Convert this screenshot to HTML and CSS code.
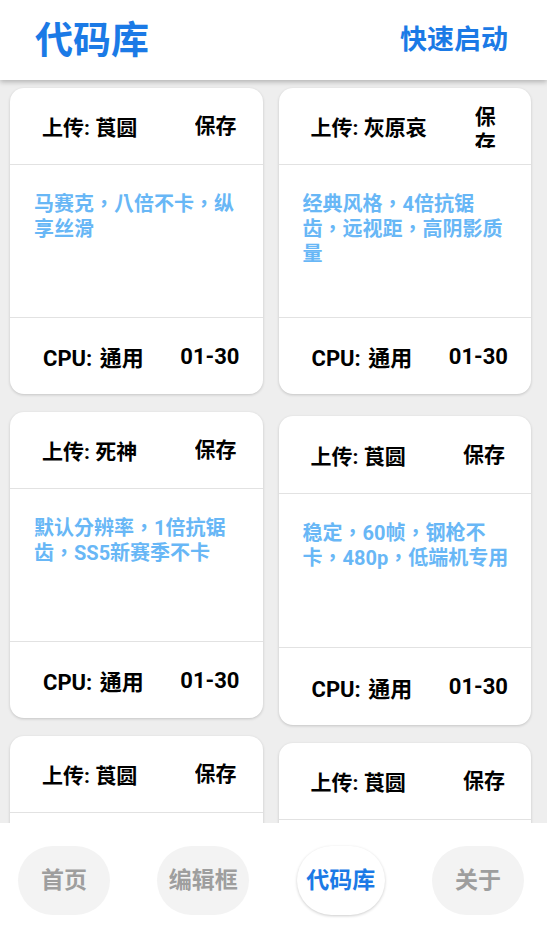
FILE: index.html
```html
<!DOCTYPE html>
<html lang="zh-CN">
<head>
    <meta charset="UTF-8">
    <meta name="viewport" content="width=device-width, initial-scale=1.0">
    <title>代码库</title>
    <link rel="stylesheet" href="styles.css">
</head>
<body>
    <header class="top-bar">
        <h1 class="page-title">代码库</h1>
        <a class="quick-start" href="#">快速启动</a>
    </header>

    <main class="library" lang="zh-TW">
        <div class="column">
            <div class="card">
                <div class="card-head">
                    <span class="uploader">上传: 莨圆</span>
                    <span class="save">保存</span>
                </div>
                <div class="card-body">马赛克，八倍不卡，纵享丝滑</div>
                <div class="card-foot">
                    <span>CPU: 通用</span>
                    <span>01-30</span>
                </div>
            </div>

            <div class="card">
                <div class="card-head">
                    <span class="uploader">上传: 死神</span>
                    <span class="save">保存</span>
                </div>
                <div class="card-body">默认分辨率，1倍抗锯齿，SS5新赛季不卡</div>
                <div class="card-foot">
                    <span>CPU: 通用</span>
                    <span>01-30</span>
                </div>
            </div>

            <div class="card">
                <div class="card-head">
                    <span class="uploader">上传: 莨圆</span>
                    <span class="save">保存</span>
                </div>
                <div class="card-body">高帧率，低画质，流畅优先</div>
                <div class="card-foot">
                    <span>CPU: 通用</span>
                    <span>01-30</span>
                </div>
            </div>
        </div>

        <div class="column">
            <div class="card">
                <div class="card-head">
                    <span class="uploader">上传: 灰原哀</span>
                    <span class="save">保存</span>
                </div>
                <div class="card-body">经典风格，4倍抗锯齿，远视距，高阴影质量</div>
                <div class="card-foot">
                    <span>CPU: 通用</span>
                    <span>01-30</span>
                </div>
            </div>

            <div class="card card-loose">
                <div class="card-head">
                    <span class="uploader">上传: 莨圆</span>
                    <span class="save">保存</span>
                </div>
                <div class="card-body">稳定，60帧，钢枪不卡，480p，低端机专用</div>
                <div class="card-foot">
                    <span>CPU: 通用</span>
                    <span>01-30</span>
                </div>
            </div>

            <div class="card">
                <div class="card-head">
                    <span class="uploader">上传: 莨圆</span>
                    <span class="save">保存</span>
                </div>
                <div class="card-body">均衡画质，90帧，适合中端机</div>
                <div class="card-foot">
                    <span>CPU: 通用</span>
                    <span>01-30</span>
                </div>
            </div>
        </div>
    </main>

    <nav class="bottom-nav">
        <a class="nav-btn" href="#">首页</a>
        <a class="nav-btn" href="#">编辑框</a>
        <a class="nav-btn active" href="#">代码库</a>
        <a class="nav-btn" href="#">关于</a>
    </nav>
</body>
</html>
```

FILE: styles.css
```css
html, body {
    height: 100%;
}
body {
    margin: 0;
    display: flex;
    flex-direction: column;
    overflow: hidden;
    background-color: #eeeeee;
    font-family: Roboto, "Noto Sans CJK TC", sans-serif;
}
a {
    text-decoration: none;
}
.top-bar {
    position: relative;
    z-index: 2;
    flex-shrink: 0;
    height: 80px;
    display: flex;
    align-items: center;
    justify-content: space-between;
    padding: 0 39px 0 35px;
    background-color: white;
    box-shadow: 0 2px 5px rgba(0,0,0,0.25);
}
.page-title {
    margin: 0;
    color: #1b7ae6;
    font-size: 38px;
    font-weight: bold;
    line-height: 1;
}
.quick-start {
    color: #1b7ae6;
    font-size: 27px;
    font-weight: bold;
    line-height: 1;
}
.library {
    flex: 1;
    min-height: 0;
    overflow: hidden;
    display: flex;
    gap: 16px;
    padding: 8px 16px 0 10px;
}
.column {
    flex: 1;
    min-width: 0;
    display: flex;
    flex-direction: column;
    gap: 18px;
}
.card {
    flex-shrink: 0;
    background-color: white;
    border-radius: 14px;
    box-shadow: 0 1px 3px rgba(0,0,0,0.18);
    overflow: hidden;
}
.card-loose {
    margin-top: 4px;
}
.card-loose .card-head,
.card-loose .card-foot {
    height: 77px;
}
.card-head {
    height: 76px;
    display: flex;
    align-items: center;
    justify-content: space-between;
    padding: 0 26px 0 32px;
    border-bottom: 1px solid #e2e2e2;
    font-size: 21px;
    font-weight: bold;
    color: black;
}
.uploader {
    flex-shrink: 0;
    margin-right: 48px;
    white-space: nowrap;
}
.save {
    max-height: 44px;
    line-height: 26px;
    overflow: hidden;
}
.card-body {
    height: 125px;
    padding: 27px 20px 0 24px;
    border-bottom: 1px solid #e2e2e2;
    color: #68b7f6;
    font-size: 20px;
    font-weight: bold;
    line-height: 25px;
}
.card-loose .card-body {
    height: 126px;
}
.card-foot {
    height: 76px;
    display: flex;
    align-items: center;
    justify-content: space-between;
    padding: 0 23px 0 33px;
    font-size: 22px;
    font-weight: bold;
    word-spacing: 2px;
    color: black;
}
.bottom-nav {
    position: relative;
    z-index: 2;
    flex-shrink: 0;
    height: 114px;
    box-sizing: border-box;
    display: flex;
    align-items: center;
    justify-content: space-between;
    padding: 0 23px 0 18px;
    background-color: white;
}
.nav-btn {
    width: 92px;
    height: 69px;
    display: flex;
    align-items: center;
    justify-content: center;
    border-radius: 35px;
    background-color: #f3f3f3;
    color: #9e9e9e;
    font-size: 23px;
    font-weight: bold;
    line-height: 1;
}
.nav-btn.active {
    width: 88px;
    background-color: white;
    color: #1b7ae6;
    box-shadow: 0 1px 3px rgba(0,0,0,0.2);
}
```
